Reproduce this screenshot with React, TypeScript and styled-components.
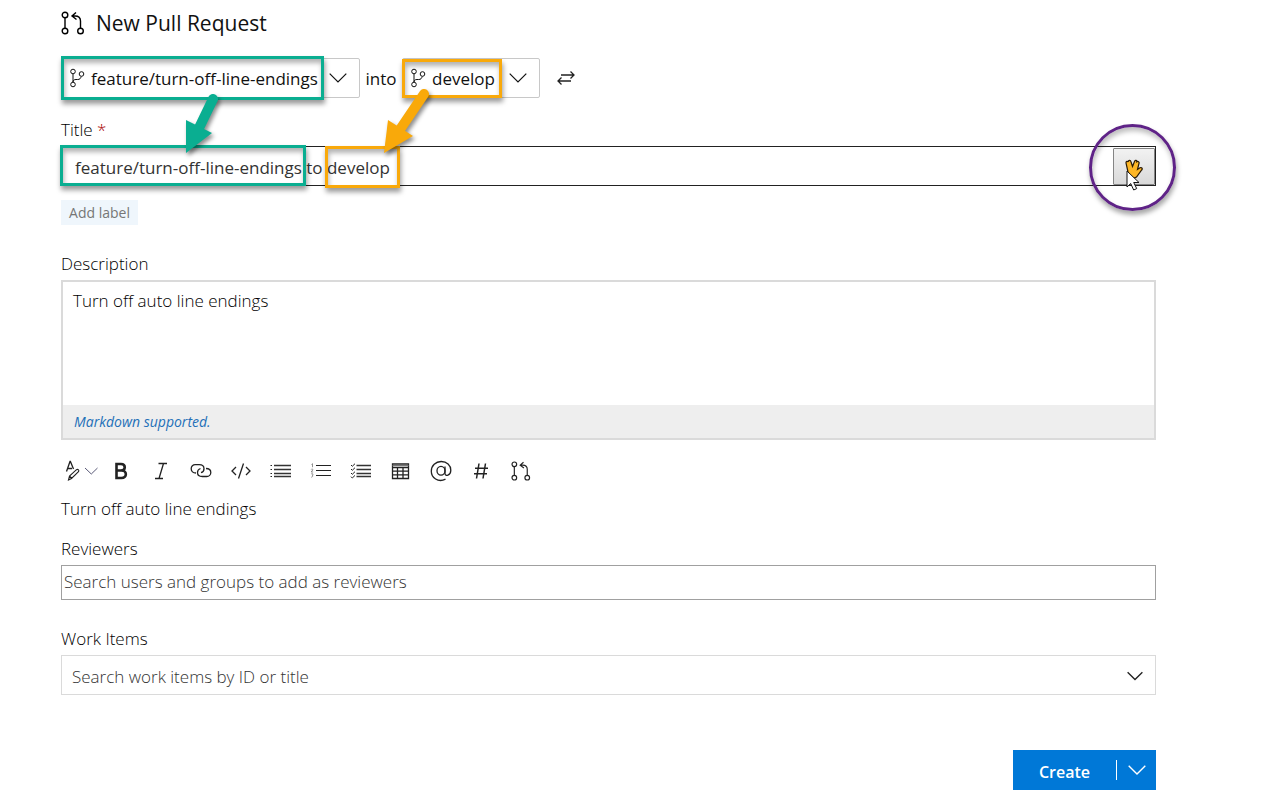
import React from "react";
import styled, { createGlobalStyle } from "styled-components";

const GlobalStyle = createGlobalStyle`
  *, *::before, *::after { box-sizing: border-box; }
  body {
    margin: 0;
    background: #fff;
    color: #000;
    font-family: "Open Sans", "Noto Sans", sans-serif;
    font-size: 17px;
    font-weight: 300;
    line-height: 24px;
  }
  button, input, textarea { font: inherit; color: inherit; margin: 0; }
  svg { display: block; flex: none; }
`;

const green = "#0aae91";
const orange = "#f9a90a";

const Page = styled.main`
  position: relative;
  display: flex;
  flex-direction: column;
  padding: 8px 124px 10px 61px;
`;

const Header = styled.header`
  display: flex;
  align-items: center;
  gap: 11px;
  height: 30px;
`;

const Heading = styled.h1`
  margin: 0;
  font-size: 21px;
  line-height: 30px;
  font-weight: 400;
  color: #111;
`;

const BranchRow = styled.div`
  display: flex;
  align-items: center;
  margin-top: 20px;
  height: 40px;
  color: #111;
  font-weight: 400;
`;

const BranchPicker = styled.button<{ $width: number }>`
  position: relative;
  display: flex;
  align-items: center;
  gap: 6px;
  width: ${(p) => p.$width}px;
  height: 40px;
  padding: 0 12px 0 7px;
  border: 1px solid #c8c8c8;
  border-radius: 2px;
  background: #fff;
  white-space: nowrap;

  & > svg:last-of-type { margin-left: auto; }
`;

const BranchName = styled.span`
  padding-top: 2px;
`;

const Into = styled.span`
  width: 42px;
  padding-top: 2px;
  text-align: center;
`;

const IconButton = styled.button<{ $width?: number }>`
  display: flex;
  align-items: center;
  justify-content: center;
  width: ${(p) => p.$width ?? 40}px;
  height: 40px;
  padding: 0;
  border: 0;
  background: none;
  color: #222;
`;

const Highlight = styled.span<{ $color: string; $left: number; $top: number; $width: number; $height: number }>`
  position: absolute;
  z-index: 1;
  left: ${(p) => p.$left}px;
  top: ${(p) => p.$top}px;
  width: ${(p) => p.$width}px;
  height: ${(p) => p.$height}px;
  border: 3px solid ${(p) => p.$color};
  box-shadow: 1px 4px 5px rgba(0, 0, 0, 0.4), inset 1px 4px 5px rgba(0, 0, 0, 0.3);
  pointer-events: none;
`;

const Arrow = styled.svg<{ $left: number; $top: number }>`
  position: absolute;
  z-index: 2;
  left: ${(p) => p.$left}px;
  top: ${(p) => p.$top}px;
  overflow: visible;
  filter: drop-shadow(2px 3px 2px rgba(0, 0, 0, 0.45));
  pointer-events: none;
`;

const Label = styled.label<{ $gap: number }>`
  display: block;
  align-self: flex-start;
  margin-top: ${(p) => p.$gap}px;
  height: 28px;
`;

const Required = styled.span`
  color: #a80000;
`;

const TitleField = styled.div`
  position: relative;
  display: flex;
  height: 40px;
  padding: 1px 0 0 1px;
  border: 1px solid #222;
`;

const TitleInput = styled.input`
  flex: 1;
  min-width: 0;
  padding: 2px 0 0 12px;
  border: 0;
  outline: 0;
  background: transparent;
  color: #333;
  font-weight: 400;
`;

const HandButton = styled.button`
  position: relative;
  display: flex;
  align-items: center;
  justify-content: center;
  width: 42px;
  padding: 4px 0 0;
  border: 1px solid #858585;
  border-radius: 1px;
  background: linear-gradient(#f2f2f2, #d9d9d9);
`;

const Ring = styled.span`
  position: absolute;
  left: -25px;
  top: -25px;
  width: 87px;
  height: 87px;
  border: 3px solid #5f2387;
  border-radius: 50%;
  box-shadow: 1px 4px 5px rgba(0, 0, 0, 0.35), inset 1px 4px 5px rgba(0, 0, 0, 0.25);
  pointer-events: none;
`;

const Pointer = styled.svg`
  position: absolute;
  left: 12px;
  top: 21px;
`;

const AddLabel = styled.button`
  align-self: flex-start;
  margin-top: 14px;
  width: 77px;
  height: 25px;
  padding: 0;
  border: 0;
  background: #eff6fc;
  color: #767676;
  font-size: 14px;
  font-weight: 400;
`;

const Editor = styled.div`
  display: flex;
  flex-direction: column;
  border: 2px solid #dadada;
`;

const EditorText = styled.textarea`
  height: 123px;
  padding: 7px 10px;
  border: 0;
  outline: 0;
  resize: none;
`;

const EditorFooter = styled.div`
  height: 33px;
  padding: 5px 11px 0;
  background: #eee;
  font-size: 14px;
  font-weight: 400;
`;

const MarkdownLink = styled.a`
  color: #2470b8;
  font-style: italic;
  text-decoration: none;
`;

const Toolbar = styled.div`
  display: flex;
  margin-top: 11px;
`;

const Preview = styled.p`
  margin: 5px 0 0;
  line-height: 26px;
`;

const ReviewersInput = styled.input`
  width: 100%;
  height: 35px;
  padding: 0 2px 2px;
  border: 1px solid #a0a0a0;
  outline: 0;

  &::placeholder { color: #333; opacity: 1; }
`;

const WorkItemsField = styled.div`
  display: flex;
  height: 40px;
  border: 1px solid #dadada;
`;

const WorkItemsInput = styled.input`
  flex: 1;
  min-width: 0;
  padding: 3px 10px 0;
  border: 0;
  outline: 0;
  background: transparent;

  &::placeholder { color: #333; opacity: 1; }
`;

const Actions = styled.div`
  display: flex;
  align-self: flex-end;
  align-items: center;
  margin-top: 55px;
  background: #0078d7;
  color: #fff;
`;

const CreateButton = styled.button`
  width: 103px;
  height: 40px;
  padding: 3px 0 0;
  border: 0;
  background: none;
  color: #fff;
  font-size: 16px;
  font-weight: 600;
`;

const Divider = styled.span`
  width: 1px;
  height: 20px;
  background: #fff;
`;

const MoreButton = styled(IconButton)`
  width: 39px;
  color: #fff;
`;

function PullRequestIcon({ size }: { size: number }) {
  return (
    <svg width={size} height={size} viewBox="0 0 24 24" fill="none" stroke="currentColor" strokeWidth="1.4" aria-hidden="true">
      <circle cx="4" cy="4" r="2.8" />
      <circle cx="4" cy="20" r="2.8" />
      <circle cx="19.5" cy="20" r="2.8" />
      <path d="M4 6.8v10.4M15 1.500L11 5l4.500 3.500M11 5h3c4 0 5.500 2 5.500 5v7.200" />
    </svg>
  );
}

function BranchIcon() {
  return (
    <svg width="16" height="20" viewBox="0 0 16 20" fill="none" stroke="currentColor" strokeWidth="1" aria-hidden="true">
      <circle cx="4" cy="3.500" r="2.300" />
      <circle cx="4" cy="16.500" r="2.300" />
      <circle cx="12.500" cy="6" r="2.300" />
      <path d="M4 6v8M12.200 8.500c-.5 2-1.500 3-3.500 3H7c-1.800 0-3 .8-3 2.500" />
    </svg>
  );
}

function Chevron({ width = 18, stroke = 1.2 }: { width?: number; stroke?: number }) {
  return (
    <svg width={width} height={width} viewBox="0 0 18 18" fill="none" stroke="currentColor" strokeWidth={stroke} aria-hidden="true">
      <path d="M.7 4.700L9 13l8.300-8.300" />
    </svg>
  );
}

function ToolIcon({ children, width = 22 }: { children: React.ReactNode; width?: number }) {
  return (
    <svg width={width} height="22" viewBox={`0 0 ${width} 22`} fill="none" stroke="currentColor" strokeWidth="1.300" aria-hidden="true">
      {children}
    </svg>
  );
}

const Format = () => (
  <ToolIcon width={34}>
    <path d="M2.500 11.500L6 1.500h.4L9.500 9M3.500 8.500H8" />
    <path d="M4.500 20l1-4 7-6.300c1.500-1 3 .6 2 2l-7 6.800zM5.500 16l2.500 2.500" strokeWidth="1.100" />
    <path d="M21 8l6.300 6 6.200-6" stroke="#5a5a78" strokeWidth="1" />
  </ToolIcon>
);

const Bold = () => (
  <ToolIcon>
    <path d="M6.500 4h4.500c5 0 5 6.500 0 6.500H6.500zM6.500 10.500h5c5.800 0 5.800 7.500 0 7.500h-5z" strokeWidth="2.600" />
  </ToolIcon>
);

const Italic = () => (
  <ToolIcon>
    <path d="M8.500 3.500H17M5 18.500h8M13.500 3.500l-4.500 15" strokeWidth="1.300" />
  </ToolIcon>
);

const LinkIcon = () => (
  <ToolIcon>
    <path d="M6 13C3 13 1.200 11 1.200 8.700 1.200 6.400 3 4.700 5.200 4.700h4c3 0 4.800 1.800 4.800 4 0 2-1.300 3.500-3 4" />
    <path d="M16 8.500c3 0 4.800 1.700 4.800 4 0 2.300-1.800 4-4 4h-4.500c-3 0-4.800-1.800-4.800-4 0-2 1.300-3.500 3-4" />
  </ToolIcon>
);

const Code = () => (
  <ToolIcon>
    <path d="M6 7l-4 4 4 4M16 7l4 4-4 4M13.500 3.500l-5 15" />
  </ToolIcon>
);

const Bullets = () => (
  <ToolIcon>
    <path d="M4 5.500h17M4 9.500h17M4 13.500h17M4 16.500h17" stroke="#333" strokeWidth="1.300" />
    <path d="M.5 5.500H2M.5 9.500H2M.5 13.500H2M.5 16.500H2" strokeWidth="1" />
  </ToolIcon>
);

const Numbers = () => (
  <ToolIcon>
    <path d="M6 5.500h15M6 10.500h15M6 15.500h15" strokeWidth="1.200" />
    <path d="M1.500 4.500l1-.8v3.500M1.200 9.500c.5-1 2-.5 1.500.5l-1.500 2h2M1.200 13.800h1.600c.6.800-.1 1.400-.8 1.400 1 0 1.400 1.600-.8 2" stroke="#777" strokeWidth=".8" />
  </ToolIcon>
);

const Checklist = () => (
  <ToolIcon>
    <path d="M6.500 5.500H21M6.500 9.500H21M6.500 13.500H21M6.500 16.500H21" stroke="#333" />
    <path d="M1 5l1.300 1.300L5 3.700M1 9l1.300 1.300L5 7.700M1 13l1.300 1.300L5 11.700M1 16.700L2.300 18 5 15.400" strokeWidth="1" />
  </ToolIcon>
);

const Table = () => (
  <ToolIcon>
    <path d="M2.500 4h16v14.500h-16zM2.500 7.500h16M2.500 11.200h16M2.500 14.800h16M7.500 7.500v11M13 7.500v11" />
    <path d="M2.500 5.500h16" stroke="#777" />
  </ToolIcon>
);

const Mention = () => (
  <ToolIcon>
    <path d="M15.500 19.200C8 23 1.300 17.500 1.300 11.200 1.300 5.500 5.700 1.500 11.200 1.500c5.600 0 9.600 3.800 9.600 8.700 0 5.400-5.800 6.600-5.800 3.300V6.500" />
    <ellipse cx="11" cy="10.800" rx="4" ry="4.400" />
  </ToolIcon>
);

const Hash = () => (
  <ToolIcon>
    <path d="M9 3.500L6.500 18.500M15.500 3.500L13 18.500M5 8.200h13M4 13.800h13" strokeWidth="1.500" />
  </ToolIcon>
);

const tools = [
  { name: "Bold", Icon: Bold },
  { name: "Italic", Icon: Italic },
  { name: "Insert link", Icon: LinkIcon },
  { name: "Code", Icon: Code },
  { name: "Bulleted list", Icon: Bullets },
  { name: "Numbered list", Icon: Numbers },
  { name: "Task list", Icon: Checklist },
  { name: "Insert table", Icon: Table },
  { name: "Mention someone", Icon: Mention },
  { name: "Link a work item", Icon: Hash },
];

export default function App() {
  return (
    <>
      <GlobalStyle />
      <Page>
        <Header>
          <PullRequestIcon size={24} />
          <Heading>New Pull Request</Heading>
        </Header>

        <BranchRow>
          <BranchPicker type="button" $width={299}>
            <BranchIcon />
            <BranchName>feature/turn-off-line-endings</BranchName>
            <Chevron />
            <Highlight $color={green} $left={-1} $top={-3} $width={263} $height={44} />
          </BranchPicker>
          <Into>into</Into>
          <BranchPicker type="button" $width={138}>
            <BranchIcon />
            <BranchName>develop</BranchName>
            <Chevron />
            <Highlight $color={orange} $left={-1} $top={0} $width={100} $height={39} />
          </BranchPicker>
          <IconButton type="button" $width={52} aria-label="Swap branches">
            <svg width="18" height="18" viewBox="0 0 18 18" fill="none" stroke="currentColor" strokeWidth="1.300" aria-hidden="true">
              <path d="M4 6h13M13.500 2.500L17 6l-3.500 3.500M14 12H1M4.500 8.500L1 12l3.500 3.500" />
            </svg>
          </IconButton>
        </BranchRow>

        <Label htmlFor="title" $gap={20}>
          Title <Required>*</Required>
        </Label>
        <TitleField>
          <TitleInput id="title" defaultValue="feature/turn-off-line-endings to develop" />
          <Highlight $color={green} $left={-2} $top={-2} $width={246} $height={41} />
          <Highlight $color={orange} $left={263} $top={-1} $width={75} $height={42} />
          <HandButton type="button" aria-label="Fill in title">
            <svg width="18" height="20" viewBox="0 0 18 20" aria-hidden="true">
              <path
                d="M3 13L1 4c-.2-1.800 1.700-2.200 2.200-1C3.400.8 5.500.9 5.900 2.500L7.500 7.500 9.600 2.200c.7-1.500 2.500-1 2.200.6 1.200-.8 2.700.1 2.200 1.500L12.500 10.500l2.500-1.700c2-.7 2.800 1 1.700 2.200L11.500 18c-3 2-7 0-8.500-5z"
                fill="#fdb625"
                stroke="#2b1b05"
                strokeWidth="1.200"
              />
            </svg>
            <Ring />
            <Pointer width="14" height="22" viewBox="0 0 14 22" aria-hidden="true">
              <path d="M1 1v16l3.700-3.500 3 6.500 3-1.400-3-6.100H13z" fill="#fff" stroke="#111" />
            </Pointer>
          </HandButton>
        </TitleField>
        <AddLabel type="button">Add label</AddLabel>

        <Label htmlFor="description" $gap={27}>
          Description
        </Label>
        <Editor>
          <EditorText id="description" defaultValue="Turn off auto line endings" />
          <EditorFooter>
            <MarkdownLink href="#markdown">Markdown supported.</MarkdownLink>
          </EditorFooter>
        </Editor>

        <Toolbar>
          <IconButton type="button" aria-label="Text format">
            <Format />
          </IconButton>
          {tools.map(({ name, Icon }) => (
            <IconButton key={name} type="button" aria-label={name}>
              <Icon />
            </IconButton>
          ))}
          <IconButton type="button" aria-label="Link a pull request">
            <PullRequestIcon size={20} />
          </IconButton>
        </Toolbar>
        <Preview>Turn off auto line endings</Preview>

        <Label htmlFor="reviewers" $gap={15}>
          Reviewers
        </Label>
        <ReviewersInput id="reviewers" placeholder="Search users and groups to add as reviewers" />

        <Label htmlFor="work-items" $gap={27}>
          Work Items
        </Label>
        <WorkItemsField>
          <WorkItemsInput id="work-items" placeholder="Search work items by ID or title" />
          <IconButton type="button" aria-label="Show work items">
            <Chevron width={16} stroke={1.5} />
          </IconButton>
        </WorkItemsField>

        <Actions>
          <CreateButton type="button">Create</CreateButton>
          <Divider />
          <MoreButton type="button" aria-label="More create options">
            <Chevron stroke={1.4} />
          </MoreButton>
        </Actions>

        <Arrow $left={186} $top={94} width="32" height="59" viewBox="0 0 32 59" aria-hidden="true">
          <path d="M27 5L13 34" stroke={green} strokeWidth="10" strokeLinecap="round" />
          <path d="M0 26L26 39L0 59z" fill={green} />
        </Arrow>
        <Arrow $left={384} $top={89} width="46" height="64" viewBox="0 0 46 64" aria-hidden="true">
          <path d="M40 5L17 39" stroke={orange} strokeWidth="10" strokeLinecap="round" />
          <path d="M4 31L29 47L0 64z" fill={orange} />
        </Arrow>
      </Page>
    </>
  );
}
